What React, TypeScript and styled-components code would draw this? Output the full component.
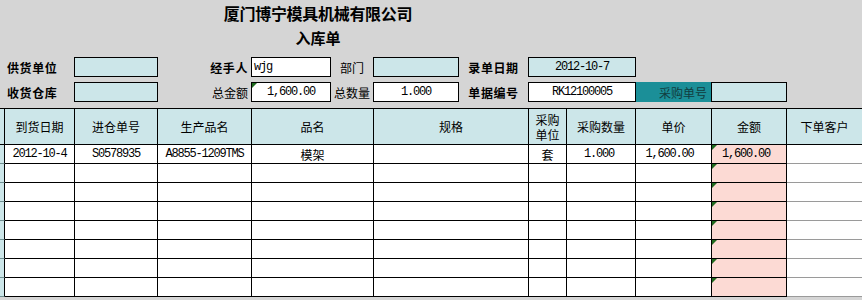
import React from "react";
import styled, { createGlobalStyle, css } from "styled-components";

const GRAY = "#d5d5d5";
const BLUE = "#cce6e9";
const PINK = "#fcdad4";
const TEAL = "#1b8f98";
const CJK = `"Noto Sans CJK SC", "Noto Sans", sans-serif`;
const MONO = `"Liberation Mono", "DejaVu Sans Mono", monospace`;

const Global = createGlobalStyle`
  html, body { margin: 0; padding: 0; background: ${GRAY}; }
  body { width: 862px; height: 300px; overflow: hidden; font-family: ${CJK}; color: #000; }
  * { box-sizing: border-box; }
`;

const Sheet = styled.div`
  width: 862px;
  height: 300px;
  background: ${GRAY};
  display: flex;
  flex-direction: column;
`;

const TitleBlock = styled.div`
  width: 636px;
  display: flex;
  flex-direction: column;
  align-items: center;
`;

const Title = styled.div`
  height: 27px;
  line-height: 27px;
  font-size: 16px;
  font-weight: 700;
  letter-spacing: -0.3px;
`;

const SubTitle = styled.div`
  height: 22px;
  line-height: 22px;
  font-size: 15px;
  font-weight: 700;
`;

const Form = styled.div`
  margin-top: 8px;
  display: grid;
  grid-template-columns: 74px 84px 93px 80px 42px 86px 69px 108px 75px 76px;
  grid-auto-rows: 20px;
  row-gap: 5px;
`;

const Label = styled.div<{ $bold?: boolean; $align?: "left" | "right" | "center" }>`
  display: flex;
  align-items: center;
  font-size: 12px;
  font-weight: ${(p) => (p.$bold ? 700 : 400)};
  letter-spacing: ${(p) => (p.$bold ? "0.6px" : "0")};
  justify-content: ${(p) =>
    p.$align === "right" ? "flex-end" : p.$align === "center" ? "center" : "flex-start"};
  padding: ${(p) => (p.$align === "right" ? "0 3px 0 0" : p.$align === "center" ? "0" : "0 0 0 7px")};
  white-space: nowrap;
`;

const flagCss = css`
  position: relative;
  &::before {
    content: "";
    position: absolute;
    left: 0;
    top: 0;
    border-top: 5px solid #1f6b1f;
    border-right: 5px solid transparent;
  }
`;

const Box = styled.div<{ $fill?: "blue" | "white"; $align?: "left" | "center"; $flag?: boolean }>`
  border: 1px solid #000;
  background: ${(p) => (p.$fill === "white" ? "#fff" : BLUE)};
  display: flex;
  align-items: center;
  justify-content: ${(p) => (p.$align === "left" ? "flex-start" : "center")};
  padding: ${(p) => (p.$align === "left" ? "0 0 0 2px" : "0")};
  font-family: ${MONO};
  font-size: 12px;
  letter-spacing: -1.2px;
  white-space: nowrap;
  ${(p) => p.$flag && flagCss}
`;

const TealCell = styled.div`
  background: ${TEAL};
  color: #123c3e;
  font-size: 12px;
  display: flex;
  align-items: center;
  justify-content: flex-end;
  padding-right: 4px;
  white-space: nowrap;
`;

const Spacer = styled.div``;

const Table = styled.div`
  margin-top: 6px;
  display: grid;
  grid-template-columns: 5px 70px 83px 94px 122px 155px 38px 69px 76px 75px 1fr;
  grid-template-rows: 36px;
  grid-auto-rows: 19px;
  border-top: 1px solid #000;
`;

const HeadCell = styled.div<{ $last?: boolean }>`
  height: 36px;
  background: ${BLUE};
  border-bottom: 1px solid #000;
  border-right: ${(p) => (p.$last ? "none" : "1px solid #000")};
  display: flex;
  align-items: center;
  justify-content: center;
  text-align: center;
  font-size: 12px;
  line-height: 15px;
  white-space: pre-line;
`;

const HeadRow = styled.div`
  display: contents;
`;

const Row = styled.div`
  display: contents;
`;

const Cell = styled.div<{
  $edge?: boolean;
  $last?: boolean;
  $pink?: boolean;
  $flag?: boolean;
  $mono?: boolean;
  $pr?: number;
}>`
  height: 19px;
  background: ${(p) => (p.$edge ? BLUE : p.$pink ? PINK : "#fff")};
  border-right: ${(p) => (p.$last ? "none" : "1px solid #000")};
  border-bottom: 1px solid ${(p) => (p.$last ? "#9a9a9a" : p.$edge ? "#6f8e90" : "#000")};
  display: flex;
  align-items: center;
  justify-content: center;
  padding-right: ${(p) => p.$pr ?? 0}px;
  font-family: ${(p) => (p.$mono ? MONO : CJK)};
  font-size: 12px;
  letter-spacing: ${(p) => (p.$mono ? "-1.2px" : "0")};
  white-space: nowrap;
  ${(p) => p.$flag && flagCss}
`;

const headers = ["", "到货日期", "进仓单号", "生产品名", "品名", "规格", "采购\n单位", "采购数量", "单价", "金额", "下单客户"];

const rows: string[][] = [
  ["2012-10-4", "S0578935", "A8855-1209TMS", "模架", "", "套", "1.000", "1,600.00", "1,600.00", ""],
  ...Array.from({ length: 7 }, () => ["", "", "", "", "", "", "", "", "", ""]),
];

const monoCols = new Set([0, 1, 2, 6, 7, 8]);

export default function App() {
  return (
    <>
      <Global />
      <Sheet>
        <TitleBlock>
          <Title>厦门博宁模具机械有限公司</Title>
          <SubTitle>入库单</SubTitle>
        </TitleBlock>

        <Form>
          <Label $bold>供货单位</Label>
          <Box $fill="blue" />
          <Label $bold $align="right">经手人</Label>
          <Box $fill="white" $align="left">wjg</Box>
          <Label $align="center">部门</Label>
          <Box $fill="blue" />
          <Label $bold $align="center">录单日期</Label>
          <Box $fill="blue">2012-10-7</Box>
          <Spacer />
          <Spacer />

          <Label $bold>收货仓库</Label>
          <Box $fill="blue" />
          <Label $align="right">总金额</Label>
          <Box $fill="white" $flag>1,600.00</Box>
          <Label $align="center">总数量</Label>
          <Box $fill="white">1.000</Box>
          <Label $bold $align="center">单据编号</Label>
          <Box $fill="white">RK12100005</Box>
          <TealCell>采购单号</TealCell>
          <Box $fill="blue" />
        </Form>

        <Table>
          <HeadRow>
            {headers.map((h, i) => (
              <HeadCell key={i} $last={i === headers.length - 1}>
                {h}
              </HeadCell>
            ))}
          </HeadRow>
          {rows.map((r, ri) => (
            <Row key={ri}>
              <Cell $edge />
              {r.map((v, ci) => (
                <Cell
                  key={ci}
                  $last={ci === r.length - 1}
                  $pink={ci === 8}
                  $flag={ci === 8}
                  $mono={monoCols.has(ci)}
                  $pr={ci === 7 ? 8 : ci === 8 ? 6 : ci === 6 ? 4 : 0}
                >
                  {v}
                </Cell>
              ))}
            </Row>
          ))}
        </Table>
      </Sheet>
    </>
  );
}
